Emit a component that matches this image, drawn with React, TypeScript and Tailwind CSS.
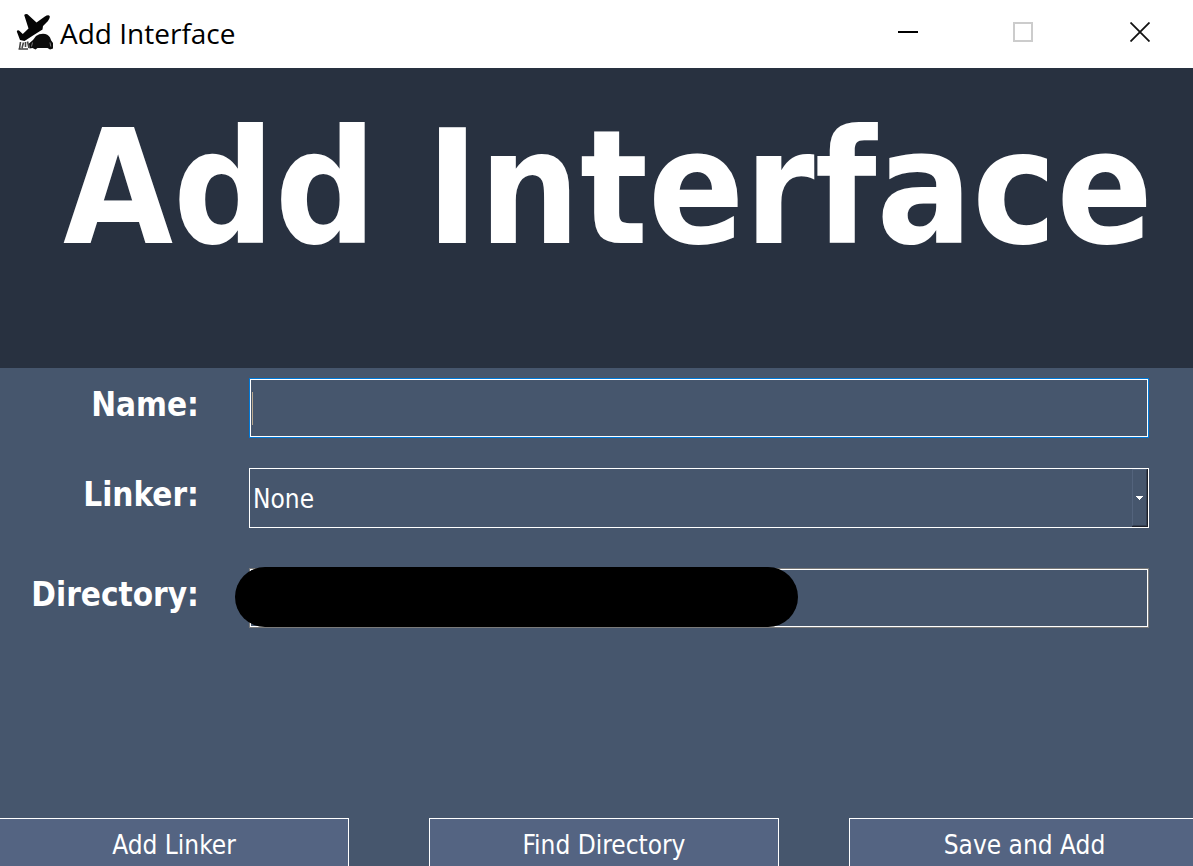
import type { ReactNode } from 'react';

const LABEL = 'w-[199px] shrink-0 pt-px text-right text-[33px] leading-10 font-bold';
const CONTROL =
  'h-full w-full appearance-none border border-white bg-transparent pt-[3px] px-[3px] text-[26px] outline-none';
const ACTION =
  'h-12 min-w-0 border-t border-white bg-[#546482] pt-1 text-[26px] leading-10 whitespace-nowrap';

function AppIcon() {
  return (
    <svg viewBox="0 0 38 38" className="h-[38px] w-[38px] shrink-0" aria-hidden="true">
      <path
        fill="#050505"
        d="M8.2 2Q9.5.4 11.5 1.2L20.5 9.5 28.5 3.8Q32.5 1.2 33.8 3.2 34.2 5.2 32 8L27 13 26.5 16.5 17 22.5 8.5 28 4 27 .8 18.5Q1.2 16.8 3 17.5L6.8 21 12.5 15.5Z"
      />
      <path
        fill="#0c0c0c"
        d="M13 30.5 17 27 20 23Q23 20.7 27 20.7 32 20.7 34 24.5L35.2 27.5 37 30V35.5L34 36.5 31.5 35H21.5L19.5 36.5 16.5 35 13.5 35.5Z"
      />
      <path
        fill="none"
        stroke="#444"
        strokeWidth="1.6"
        d="M4.5 29 3.5 36M7.5 29.5 6 35M2.5 36H12M9.5 29V34M11.5 28.5 13 35"
      />
      <path fill="none" stroke="#999" strokeWidth=".8" d="m16.5 29.5-1 4M34 29.5l.8 4" />
    </svg>
  );
}

function TitleBar() {
  return (
    <header className="flex h-[68px] items-center justify-between overflow-hidden bg-white pl-4 text-black">
      <div className="flex items-center gap-1.5 pb-1">
        <AppIcon />
        <span className="pt-0.5 font-['Open_Sans','Noto_Sans',sans-serif] text-[28px] leading-10">Add Interface</span>
      </div>
      <div className="-mr-[5px] flex h-16 self-start">
        <button aria-label="Minimize" className="flex w-[116px] items-center justify-center">
          <svg viewBox="0 0 20 20" className="h-5 w-5" shapeRendering="crispEdges">
            <path d="M0 10h20" stroke="#000" strokeWidth="2" />
          </svg>
        </button>
        <button aria-label="Maximize" disabled className="flex w-[116px] items-center justify-center pr-0.5">
          <svg viewBox="0 0 20 20" className="h-5 w-5" shapeRendering="crispEdges">
            <path d="M1 1h18v18H1z" fill="none" stroke="#ccc" strokeWidth="2" />
          </svg>
        </button>
        <button aria-label="Close" className="flex w-[116px] items-center justify-center">
          <svg viewBox="0 0 20 20" className="h-5 w-5">
            <path d="m.5.5 19 19m0-19-19 19" stroke="#111" strokeWidth="1.8" />
          </svg>
        </button>
      </div>
    </header>
  );
}

function Field({ id, label, children }: { id: string; label: string; children: ReactNode }) {
  return (
    <div className="flex gap-[50px] pr-11">
      <label htmlFor={id} className={LABEL}>
        {label}
      </label>
      <div className="relative mt-[-6px] h-[60px] min-w-0 flex-1">{children}</div>
    </div>
  );
}

export default function App() {
  return (
    <div className="flex min-h-screen flex-col overflow-hidden bg-[#46566d] font-['DejaVu_Sans_Condensed','DejaVu_Sans',sans-serif] text-white">
      <TitleBar />
      <h1 className="h-[300px] bg-[#283140] pt-7 pr-10 text-right text-[158px] leading-[184px] font-bold whitespace-nowrap">
        Add Interface
      </h1>
      <form className="flex flex-1 flex-col" onSubmit={(e) => e.preventDefault()}>
        <div className="flex flex-col pt-4">
          <Field id="name" label="Name:">
            <div className="h-full border border-[#0078d7]">
              <input id="name" type="text" className={CONTROL} />
            </div>
            <span className="absolute top-3.5 left-[3px] h-[33px] w-px bg-[#b9a991]" />
          </Field>
          <div className="mt-9">
            <Field id="linker" label="Linker:">
              <select id="linker" className={CONTROL}>
                <option>None</option>
              </select>
              <span className="pointer-events-none absolute inset-y-px right-px flex w-4 items-center justify-center border-r border-b border-r-[#1c2029] border-b-[#1c2029]">
                <span className="flex h-full w-full items-center justify-center border border-t-[#53637c] border-r-[#343f52] border-b-[#343f52] border-l-[#53637c]">
                  <svg viewBox="0 0 7 4" className="h-1 w-[7px]" shapeRendering="crispEdges">
                    <path d="M0 0h7v1H6v1H5v1H4v1H3V3H2V2H1V1H0z" fill="#fff" />
                  </svg>
                </span>
              </span>
            </Field>
          </div>
          <div className="mt-[46px]">
            <Field id="directory" label="Directory:">
              <div className="h-full border border-[#7a7a7a]">
                <input id="directory" type="text" className={CONTROL} />
              </div>
              <span className="absolute top-[-1px] left-[-14px] h-[60px] w-[563px] rounded-full bg-black" />
            </Field>
          </div>
        </div>
        <div className="mt-auto grid grid-cols-[349fr_80fr_350fr_70fr_344fr] pt-12">
          <button type="button" className={`${ACTION} border-r`}>
            Add Linker
          </button>
          <span />
          <button type="button" className={`${ACTION} border-x`}>
            Find Directory
          </button>
          <span />
          <button type="submit" className={`${ACTION} border-l pl-1.5`}>
            Save and Add
          </button>
        </div>
      </form>
    </div>
  );
}
